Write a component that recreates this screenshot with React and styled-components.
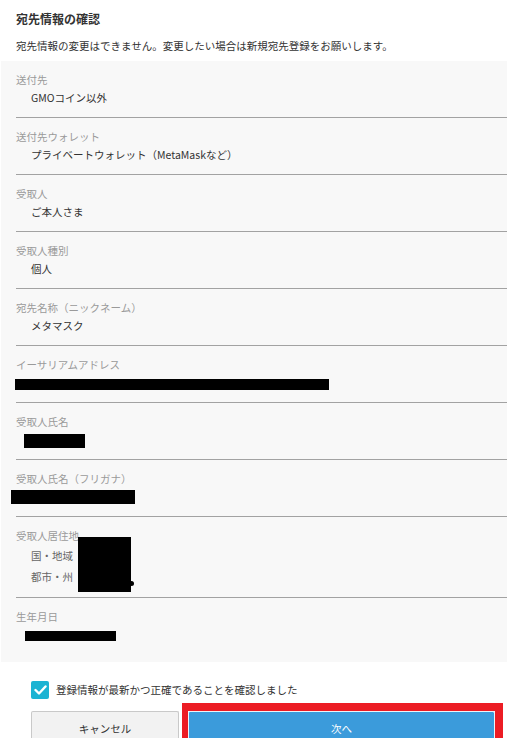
import styled, { createGlobalStyle } from "styled-components";

const GlobalStyle = createGlobalStyle`
  html, body {
    margin: 0;
    padding: 0;
    background: #ffffff;
  }
  body {
    font-family: "Noto Sans CJK JP", "Noto Sans", sans-serif;
    color: #333333;
  }
`;

const Page = styled.div`
  width: 507px;
  height: 738px;
  overflow: hidden;
  background: #ffffff;
`;

const Header = styled.div`
  padding: 10px 0 0 16px;
  height: 61px;
  box-sizing: border-box;
`;

const Title = styled.h1`
  margin: 0;
  font-size: 12px;
  line-height: 18px;
  font-weight: 700;
  color: #333;
`;

const Lead = styled.p`
  margin: 9px 0 0;
  font-size: 10.5px;
  line-height: 18px;
  color: #333;
`;

const Panel = styled.div`
  margin-left: 1px;
  background: #f8f8f8;
  padding: 0 0 8px 15px;
`;

const Row = styled.div`
  position: relative;
  padding: 10px 0;
  border-bottom: ${(p) => (p.$last ? "none" : "1px solid #a2a2a2")};
`;

const Label = styled.div`
  font-size: 10.5px;
  line-height: 18px;
  color: #9a9a9a;
`;

const Value = styled.div`
  font-size: 10.5px;
  line-height: 18px;
  color: #333;
  padding-left: 15px;
  height: 18px;
  display: flex;
  align-items: center;
`;

const Redacted = styled.span`
  display: inline-block;
  background: #000;
  width: ${(p) => p.$w}px;
  height: ${(p) => p.$h}px;
  margin-left: ${(p) => p.$x}px;
  margin-top: ${(p) => p.$y || 0}px;
`;

const BarValue = styled.div`
  height: 18px;
  display: flex;
  align-items: center;
`;

const SubList = styled.div`
  padding-left: 15px;
`;

const SubRow = styled.div`
  font-size: 10.5px;
  line-height: 21px;
  color: #666;
`;

const Cover = styled.div`
  position: absolute;
  left: 62px;
  top: 20px;
  width: 53px;
  height: 55px;
  background: #000;

  &::after {
    content: "";
    position: absolute;
    right: -3px;
    bottom: 6px;
    width: 5px;
    height: 5px;
    border-radius: 50%;
    background: #000;
  }
`;

const Footer = styled.div`
  padding: 19px 0 0 31px;
`;

const Agree = styled.label`
  display: flex;
  align-items: center;
  gap: 7px;
  font-size: 10.5px;
  line-height: 18px;
  color: #333;
`;

const Check = styled.span`
  width: 18px;
  height: 18px;
  border-radius: 2px;
  background: #1cb3d3;
  display: flex;
  align-items: center;
  justify-content: center;
`;

const Buttons = styled.div`
  display: flex;
  gap: 9px;
  margin-top: 12px;
`;

const Button = styled.button`
  height: 40px;
  box-sizing: border-box;
  font-family: inherit;
  font-size: 10.5px;
  font-weight: 400;
  padding: 0 0 6px;
  cursor: pointer;
  border-radius: 2px;
  width: ${(p) => (p.$primary ? "307px" : "148px")};
  background: ${(p) => (p.$primary ? "#3b9bdb" : "#f2f2f2")};
  color: ${(p) => (p.$primary ? "#ffffff" : "#333")};
  border: 1px solid ${(p) => (p.$primary ? "#eaf4fb" : "#c9c9c9")};
  border-bottom: none;
`;

const Highlight = styled.div`
  position: relative;
`;

const RedFrame = styled.div`
  position: absolute;
  left: -6px;
  top: -8px;
  right: -8px;
  bottom: -8px;
  border-style: solid;
  border-color: #ec1c24;
  border-width: 8px 8px 8px 6px;
  pointer-events: none;
`;

const rows = [
  { label: "送付先", value: "GMOコイン以外" },
  { label: "送付先ウォレット", value: "プライベートウォレット（MetaMaskなど）" },
  { label: "受取人", value: "ご本人さま" },
  { label: "受取人種別", value: "個人" },
  { label: "宛先名称（ニックネーム）", value: "メタマスク" },
  { label: "イーサリアムアドレス", bar: { x: -1, w: 314, h: 11, y: 2 } },
  { label: "受取人氏名", bar: { x: 8, w: 61, h: 14, y: 1 } },
  { label: "受取人氏名（フリガナ）", bar: { x: -5, w: 124, h: 14, y: -1 } },
];

export default function App() {
  return (
    <>
      <GlobalStyle />
      <Page>
        <Header>
          <Title>宛先情報の確認</Title>
          <Lead>宛先情報の変更はできません。変更したい場合は新規宛先登録をお願いします。</Lead>
        </Header>

        <Panel>
          {rows.map((r) => (
            <Row key={r.label}>
              <Label>{r.label}</Label>
              {r.bar ? (
                <BarValue>
                  <Redacted $x={r.bar.x} $w={r.bar.w} $h={r.bar.h} $y={r.bar.y} />
                </BarValue>
              ) : (
                <Value>{r.value}</Value>
              )}
            </Row>
          ))}
          <Row>
            <Label>受取人居住地</Label>
            <SubList>
              <SubRow>国・地域</SubRow>
              <SubRow>都市・州</SubRow>
            </SubList>
            <Cover />
          </Row>
          <Row $last>
            <Label>生年月日</Label>
            <BarValue>
              <Redacted $x={9} $w={91} $h={10} $y={2} />
            </BarValue>
          </Row>
        </Panel>

        <Footer>
          <Agree>
            <Check>
              <svg width="13" height="10" viewBox="0 0 13 10">
                <path d="M1.5 5 L5 8.5 L11.5 1.5" fill="none" stroke="#fff" strokeWidth="2.4" strokeLinecap="round" strokeLinejoin="round" />
              </svg>
            </Check>
            登録情報が最新かつ正確であることを確認しました
          </Agree>
          <Buttons>
            <Button>キャンセル</Button>
            <Highlight>
              <Button $primary>次へ</Button>
              <RedFrame />
            </Highlight>
          </Buttons>
        </Footer>
      </Page>
    </>
  );
}
